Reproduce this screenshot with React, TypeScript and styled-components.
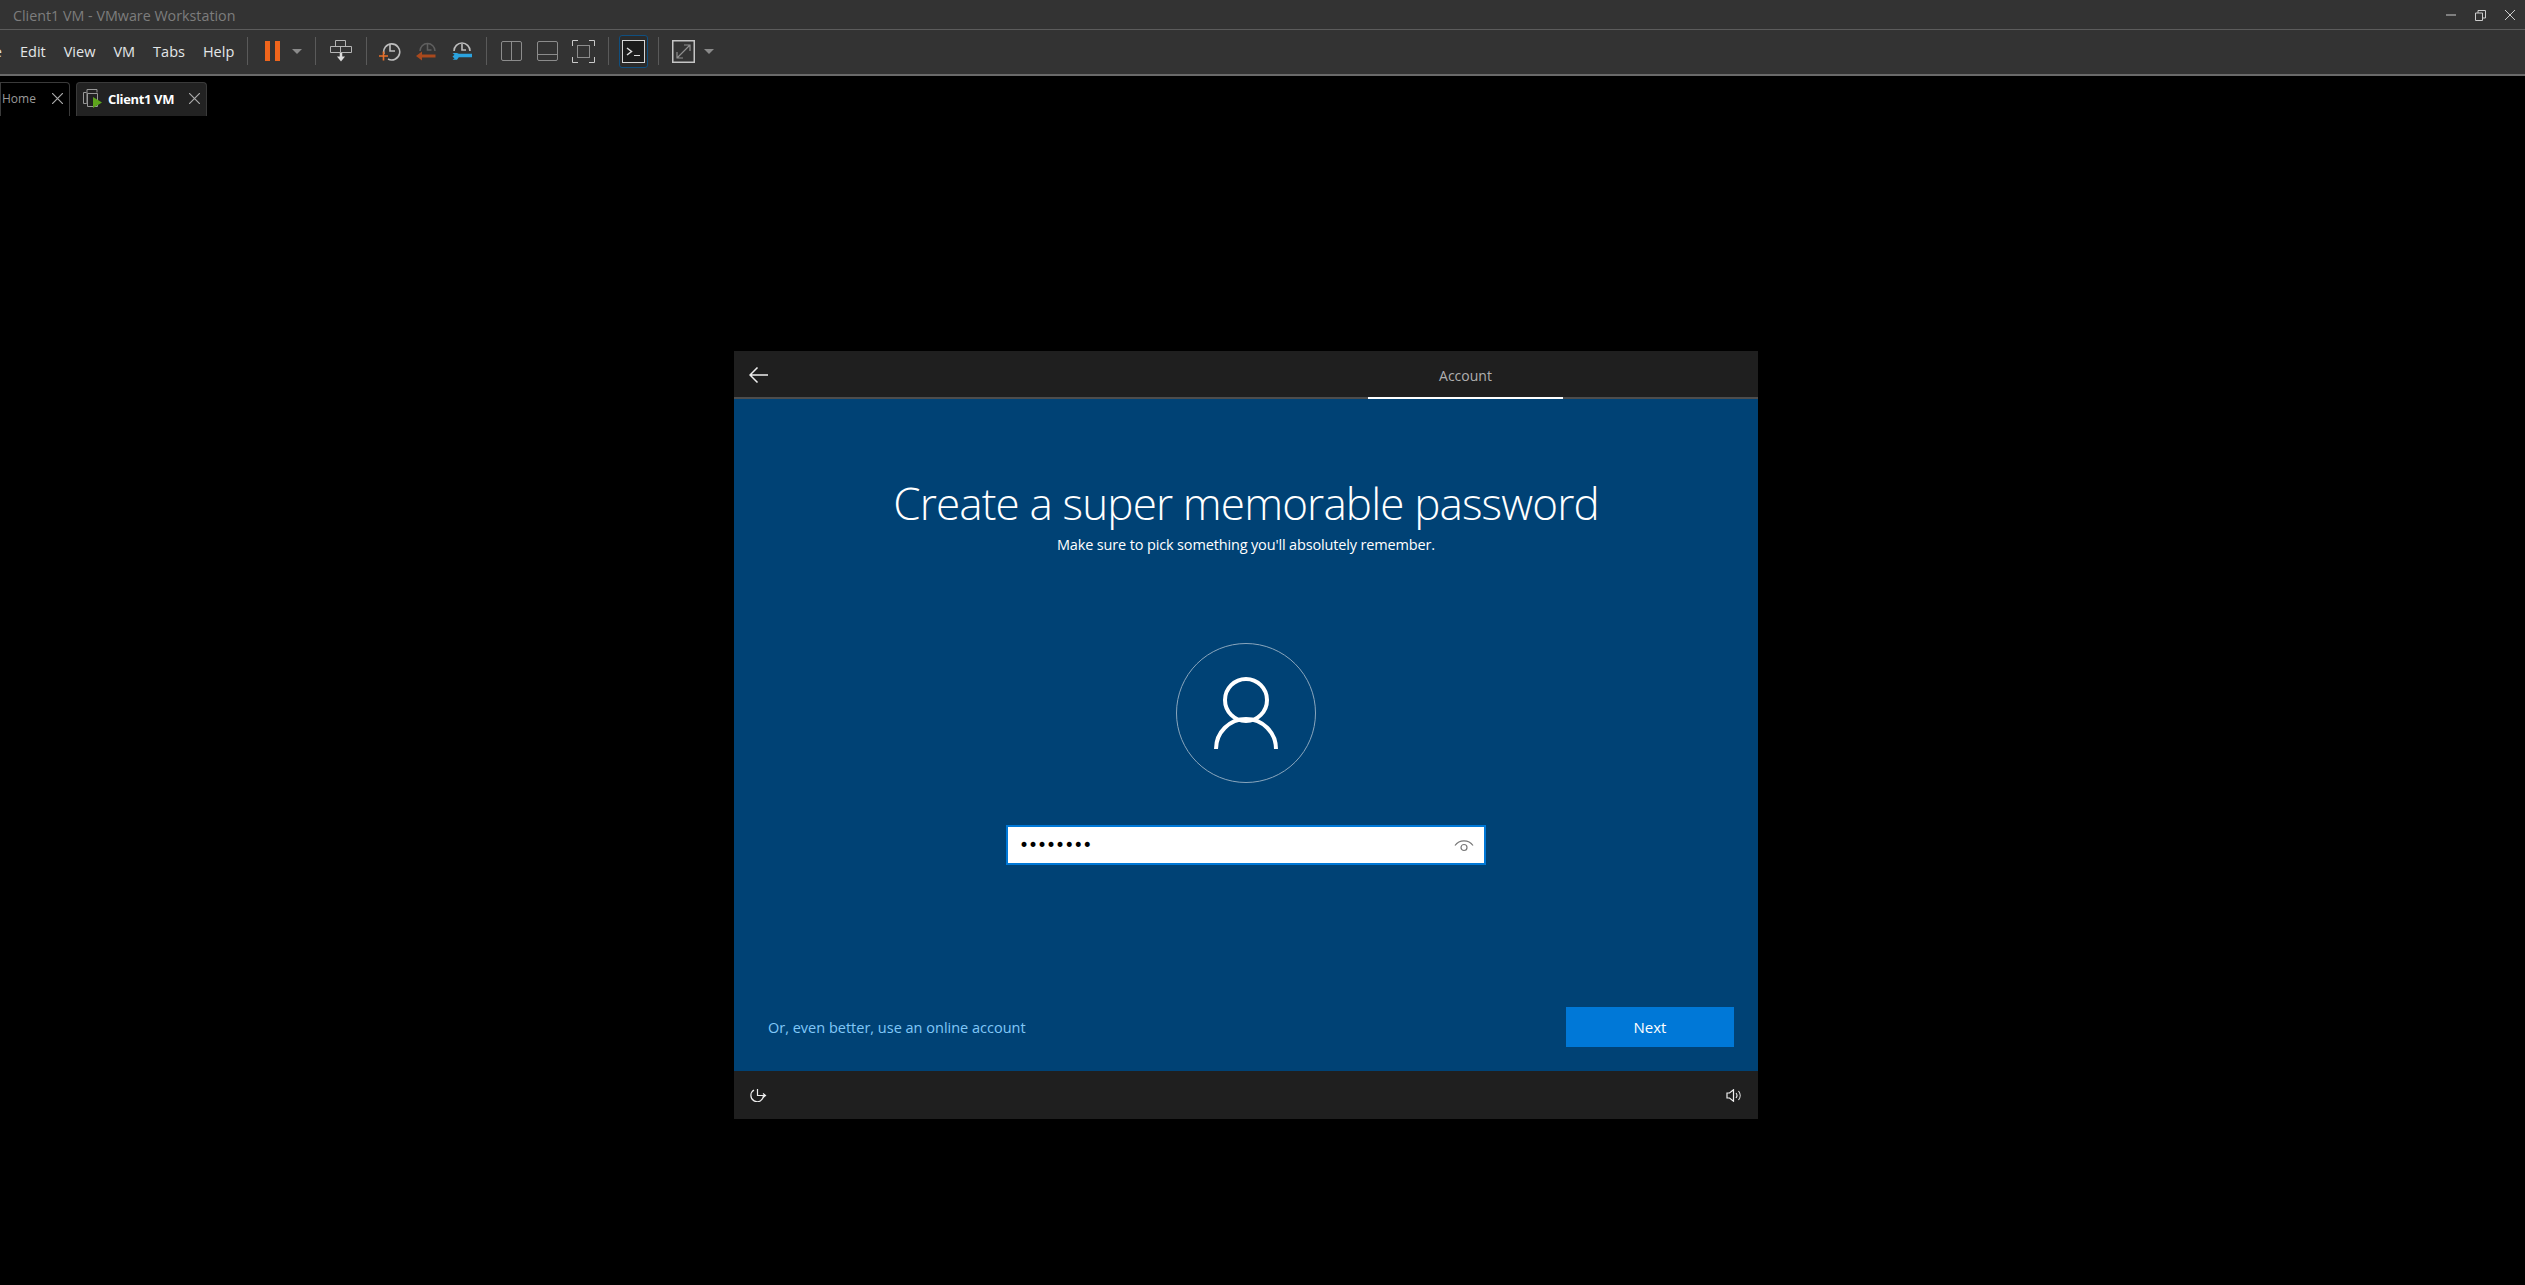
import React from 'react';
import styled, { createGlobalStyle } from 'styled-components';

const GlobalStyle = createGlobalStyle`
  html, body, #root {
    margin: 0;
    height: 100%;
    background: #000;
  }
  body {
    font-family: "Open Sans", "Noto Sans", "Liberation Sans", sans-serif;
    overflow: hidden;
  }
`;

const Page = styled.div`
  display: flex;
  flex-direction: column;
  width: 2525px;
  height: 1285px;
  overflow: hidden;
`;

const TitleBar = styled.header`
  display: flex;
  align-items: center;
  justify-content: space-between;
  height: 28px;
  box-sizing: content-box;
  padding-top: 1px;
  background: #333;
  border-bottom: 1px solid #5c5c5c;
`;

const TitleText = styled.span`
  margin-left: 13px;
  font-size: 14.3px;
  color: #7d7d7d;
`;

const WindowButtons = styled.div`
  display: flex;
  align-items: center;
  gap: 19px;
  margin-right: 10px;
  svg { display: block; }
`;

const Toolbar = styled.div`
  display: flex;
  align-items: center;
  height: 42px;
  padding-bottom: 2px;
  background: #333;
  border-bottom: 2px solid #6a6a6a;
`;

const Menu = styled.span`
  font-size: 14.5px;
  color: #e3e6e8;
  margin-right: ${p => p.$gap}px;
  margin-left: ${p => p.$left ?? 0}px;
`;

const Sep = styled.span`
  width: 1px;
  height: 28px;
  background: #5a5a5a;
  margin: 0 ${p => p.$right ?? 14}px 0 ${p => p.$left ?? 14}px;
`;

const ToolIcon = styled.svg`
  display: block;
  flex: none;
  margin-right: ${p => p.$gap ?? 0}px;
`;

const ConsoleButton = styled.div`
  display: flex;
  align-items: center;
  justify-content: center;
  width: 29px;
  height: 33px;
  margin-left: -4px;
  box-sizing: border-box;
  border: 1px solid #0f4f80;
  border-radius: 3px;
  background: #2b2b2b;
`;

const TabStrip = styled.nav`
  display: flex;
  align-items: flex-end;
  gap: 6px;
  height: 40px;
`;

const Tab = styled.div`
  display: flex;
  align-items: center;
  height: 34px;
  box-sizing: border-box;
  width: ${p => p.$width}px;
  padding-left: ${p => p.$pad}px;
  padding-bottom: 2px;
  border: 1px solid #3a3a3a;
  border-bottom: 0;
  border-radius: 0 4px 0 0;
  background: ${p => (p.$active ? '#222' : '#000')};
  ${p => p.$active && 'border-top-left-radius: 4px;'}
`;

const TabLabel = styled.span`
  font-size: ${p => (p.$active ? 13 : 12)}px;
  font-weight: ${p => (p.$active ? 700 : 400)};
  color: ${p => (p.$active ? '#fff' : '#9a9a9a')};
  letter-spacing: ${p => (p.$active ? -0.35 : 0)}px;
  margin-left: ${p => p.$left ?? 0}px;
  width: ${p => p.$width}px;
  white-space: nowrap;
`;

const Stage = styled.main`
  flex: 1;
  padding: 235px 0 0 734px;
`;

const Frame = styled.section`
  display: flex;
  flex-direction: column;
  width: 1024px;
  height: 768px;
`;

const FrameHeader = styled.div`
  display: flex;
  align-items: center;
  height: 46px;
  flex: none;
  background: #1f1f1f;
  border-bottom: 2px solid #4d4d4d;
`;

const BackIcon = styled.svg`
  display: block;
  margin: 2px 600px 0 15px;
`;

const StepTab = styled.div`
  display: flex;
  align-items: center;
  justify-content: center;
  width: 195px;
  height: 44px;
  padding-top: 2px;
  margin-bottom: -2px;
  font-size: 14px;
  color: #b0b0b0;
  border-bottom: 2px solid #fff;
`;

const Body = styled.div`
  flex: 1;
  display: flex;
  flex-direction: column;
  align-items: center;
  padding-top: 74px;
  background: #004275;
  color: #fff;
`;

const Heading = styled.h1`
  margin: 0;
  font-size: 44px;
  line-height: 60px;
  font-weight: 300;
  letter-spacing: -0.85px;
  white-space: nowrap;
`;

const SubHeading = styled.p`
  margin: 2px 0 0;
  font-size: 14.5px;
  line-height: 20px;
  letter-spacing: -0.15px;
`;

const Avatar = styled.div`
  display: flex;
  align-items: center;
  justify-content: center;
  width: 140px;
  height: 140px;
  margin-top: 88px;
  box-sizing: border-box;
  border: 1px solid #8aa6bd;
  border-radius: 50%;
`;

const PasswordField = styled.div`
  display: flex;
  align-items: center;
  justify-content: space-between;
  width: 480px;
  height: 40px;
  margin-top: 42px;
  padding: 0 10px 0 11px;
  box-sizing: border-box;
  background: #fff;
  border: 2px solid #0078d7;
`;

const Dots = styled.span`
  font-family: "DejaVu Sans", sans-serif;
  font-size: 17px;
  line-height: 1;
  letter-spacing: -1px;
  color: #000;
`;

const BodyFooter = styled.div`
  display: flex;
  align-items: center;
  justify-content: space-between;
  align-self: stretch;
  margin-top: auto;
  padding: 0 24px 24px 34px;
`;

const OnlineLink = styled.a`
  font-size: 14.5px;
  font-weight: 500;
  color: #80c8f8;
`;

const NextButton = styled.button`
  width: 168px;
  height: 40px;
  border: 0;
  background: #0078d7;
  color: #fff;
  font-family: inherit;
  font-size: 15px;
`;

const FrameFooter = styled.div`
  display: flex;
  align-items: center;
  justify-content: space-between;
  height: 48px;
  flex: none;
  padding: 0 17px 0 16px;
  background: #1f1f1f;
  svg { display: block; }
`;

const ClockIcon = ({ accent, gap }: { accent: 'plus' | 'back' | 'wrench'; gap: number }) => (
  <ToolIcon $gap={gap} width="22" height="22" viewBox="0 0 22 22" fill="none">
    {accent === 'plus' && (
      <>
        <path d="M5 14a8 8 0 1 1 4 5" stroke="#bdbdbd" strokeWidth="1.6" />
        <path d="M11 5v6h5" stroke="#bdbdbd" strokeWidth="1.6" />
        <path d="M0 16h9M4.500 11.500v9" stroke="#e8702a" strokeWidth="1.6" />
      </>
    )}
    {accent === 'back' && (
      <>
        <path d="M4 11a7.500 7.500 0 1 1 15 0" stroke="#5f5f5f" strokeWidth="1.5" />
        <path d="M11.500 4v6h4" stroke="#5f5f5f" strokeWidth="1.5" />
        <path d="M19.500 16H5.500" stroke="#a9491d" strokeWidth="3" />
        <path d="M0 16l6-4.500v9z" fill="#a9491d" />
      </>
    )}
    {accent === 'wrench' && (
      <>
        <path d="M3 11a8 8 0 1 1 16 0" stroke="#bdbdbd" strokeWidth="1.6" />
        <path d="M11 4v6h4" stroke="#bdbdbd" strokeWidth="1.6" />
        <path d="M6 13H1.500l2 1.800-2 1.800 2 1.800-2 1.400H6l1.800-2.500H21v-3.500H7.800z" fill="#2ba3df" />
      </>
    )}
  </ToolIcon>
);

const Caret = () => (
  <ToolIcon width="10" height="5" viewBox="0 0 10 5">
    <path d="M0 0h10L5 5z" fill="#8a8a8a" />
  </ToolIcon>
);

export default function App() {
  return (
    <Page>
      <GlobalStyle />
      <TitleBar>
        <TitleText>Client1 VM - VMware Workstation</TitleText>
        <WindowButtons>
          <svg width="10" height="2" viewBox="0 0 10 2"><path d="M0 1h10" stroke="#ccc" /></svg>
          <svg width="11" height="11" viewBox="0 0 11 11" fill="none">
            <path d="M.5 3h7v7.500h-7zM3 3V.5h7.500V8H8" stroke="#ccc" />
          </svg>
          <svg width="10" height="10" viewBox="0 0 10 10" fill="none">
            <path d="M0 0l10 10M10 0L0 10" stroke="#ccc" />
          </svg>
        </WindowButtons>
      </TitleBar>
      <Toolbar>
        <Menu $left={-21} $gap={18}>File</Menu>
        <Menu $gap={18}>Edit</Menu>
        <Menu $gap={18}>View</Menu>
        <Menu $gap={18}>VM</Menu>
        <Menu $gap={18}>Tabs</Menu>
        <Menu $gap={0}>Help</Menu>
        <Sep $left={13} $right={17} />
        <ToolIcon width="15" height="20" viewBox="0 0 15 20" $gap={12}>
          <path d="M0 0h5v20H0zM10 0h5v20h-5z" fill="#f0651c" />
        </ToolIcon>
        <Caret />
        <Sep $left={13} $right={14} />
        <ToolIcon width="22" height="22" viewBox="0 0 22 22" fill="none">
          <path d="M5.500.5h10v6h-10zM.5 6.500h10v6H.5zM10.500 6.500h11v6h-11z" stroke="#b5b5b5" />
          <path d="M11 13v4" stroke="#ddd" strokeWidth="2.500" />
          <path d="M7 16.500h8L11 21.500z" fill="#ddd" />
        </ToolIcon>
        <Sep $left={14} $right={12} />
        <ClockIcon accent="plus" gap={15} />
        <ClockIcon accent="back" gap={13} />
        <ClockIcon accent="wrench" gap={0} />
        <Sep $left={13} $right={14} />
        <ToolIcon $gap={15} width="21" height="20" viewBox="0 0 21 20" fill="none">
          <rect x=".5" y=".5" width="20" height="19" rx="1.500" stroke="#8c8c8c" />
          <path d="M10.500 1v18" stroke="#8c8c8c" />
        </ToolIcon>
        <ToolIcon $gap={14} width="21" height="20" viewBox="0 0 21 20" fill="none">
          <rect x=".5" y=".5" width="20" height="19" rx="1.500" stroke="#8c8c8c" />
          <path d="M1 13.500h19" stroke="#8c8c8c" />
        </ToolIcon>
        <ToolIcon width="23" height="23" viewBox="0 0 23 23" fill="none">
          <path d="M.5 6V.5H6M17 .5h5.500V6M22.500 17v5.500H17M6 22.500H.5V17" stroke="#c9c9c9" />
          <rect x="5.500" y="5.500" width="12" height="12" stroke="#8c8c8c" />
        </ToolIcon>
        <Sep $left={13} $right={14} />
        <ConsoleButton>
          <svg width="23" height="23" viewBox="0 0 23 23" fill="none" style={{ display: 'block', flex: 'none' }}>
            <rect x=".5" y=".5" width="22" height="22" fill="#1c1c1c" stroke="#d5d5d5" />
            <path d="M5 8l4.500 3.500L5 15" stroke="#ddd" strokeWidth="1.500" />
            <path d="M12 15.500h6" stroke="#ddd" />
          </svg>
        </ConsoleButton>
        <Sep $left={10} $right={13} />
        <ToolIcon width="23" height="23" viewBox="0 0 23 23" fill="none" $gap={9}>
          <rect x=".75" y=".75" width="21.500" height="21.500" stroke="#c5c5c5" strokeWidth="1.500" />
          <path d="M5 18L18 5M12 5h6v6M5 12v6h6" stroke="#8f8f8f" strokeWidth="1.200" />
        </ToolIcon>
        <Caret />
      </Toolbar>
      <TabStrip>
        <Tab $width={70} $pad={1}>
          <TabLabel $width={50}>Home</TabLabel>
          <svg width="11" height="11" viewBox="0 0 11 11" fill="none"><path d="M0 0l11 11M11 0L0 11" stroke="#aaa" strokeWidth="1.200" /></svg>
        </Tab>
        <Tab $active $width={131} $pad={6}>
          <svg width="19" height="19" viewBox="0 0 19 19" fill="none" style={{ flex: 'none' }}>
            <path d="M.5 3.500h3M.5 3.500v11h3M4 .5h10v3M4 .5V15" stroke="#999" />
            <path d="M4.500 4.500h10v13h-10z" stroke="#999" />
            <path d="M10 8l9 5.500-9 5.500z" fill="#5da51c" />
          </svg>
          <TabLabel $active $left={6} $width={81}>Client1 VM</TabLabel>
          <svg width="11" height="11" viewBox="0 0 11 11" fill="none"><path d="M0 0l11 11M11 0L0 11" stroke="#aaa" strokeWidth="1.200" /></svg>
        </Tab>
      </TabStrip>
      <Stage>
        <Frame>
          <FrameHeader>
            <BackIcon width="19" height="16" viewBox="0 0 19 16" fill="none">
              <path d="M19 8H1M8.500.5L1 8l7.500 7.500" stroke="#eee" strokeWidth="1.500" />
            </BackIcon>
            <StepTab>Account</StepTab>
          </FrameHeader>
          <Body>
            <Heading>Create a super memorable password</Heading>
            <SubHeading>Make sure to pick something you'll absolutely remember.</SubHeading>
            <Avatar>
              <svg width="64" height="72" viewBox="0 0 64 72" fill="none">
                <circle cx="32" cy="23" r="21" stroke="#fff" strokeWidth="4" />
                <path d="M2 72a30 30 0 0 1 60 0" stroke="#fff" strokeWidth="4" />
              </svg>
            </Avatar>
            <PasswordField>
              <Dots>••••••••</Dots>
              <svg width="20" height="13" viewBox="0 0 20 13" fill="none">
                <path d="M1 6.500a11 11 0 0 1 18 0" stroke="#777" strokeWidth="1.200" />
                <circle cx="10" cy="8.500" r="3" stroke="#777" strokeWidth="1.200" />
              </svg>
            </PasswordField>
            <BodyFooter>
              <OnlineLink>Or, even better, use an online account</OnlineLink>
              <NextButton>Next</NextButton>
            </BodyFooter>
          </Body>
          <FrameFooter>
            <svg width="17" height="14" viewBox="0 0 17 14" fill="none">
              <path d="M4 2a6.300 6.300 0 1 0 9.500 5.500" stroke="#eee" strokeWidth="1.200" />
              <path d="M7.500 1v6.500H15M13 5.500l2.500 2-2.500 2" stroke="#eee" strokeWidth="1.200" />
            </svg>
            <svg width="15" height="13" viewBox="0 0 15 13" fill="none">
              <path d="M1 4h2.500L7.500.8v11.400L3.500 9H1z" stroke="#eee" strokeWidth="1.200" />
              <path d="M10 4a4 4 0 0 1 0 5M12.500 2a7 7 0 0 1 0 9" stroke="#eee" strokeWidth="1.100" />
            </svg>
          </FrameFooter>
        </Frame>
      </Stage>
    </Page>
  );
}
